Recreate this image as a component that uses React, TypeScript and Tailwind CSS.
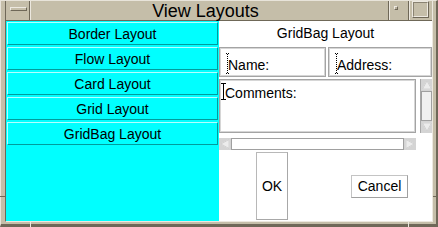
import React from "react";

const font = { fontFamily: '"Liberation Sans", Arial, sans-serif' };

function Arrow({ dir }: { dir: "up" | "down" | "left" | "right" }) {
  const pts: Record<string, string> = {
    up: "6,2 10.5,10 1.5,10",
    down: "6,10 10.5,2 1.5,2",
    left: "2,6 10,1.5 10,10.5",
    right: "10,6 2,1.5 2,10.5",
  };
  return (
    <svg width="12" height="12" viewBox="0 0 12 12" className="block">
      <polygon points={pts[dir]} fill="#ececec" stroke="#ffffff" strokeWidth="1" />
      <polygon points={pts[dir]} fill="none" stroke="#b0b0b0" strokeWidth="0.6" />
    </svg>
  );
}

function DottedCaret() {
  return (
    <svg width="3" height="21" viewBox="0 0 3 21" className="block shrink-0">
      <line x1="0" y1="0.5" x2="3" y2="0.5" stroke="#000" strokeWidth="1" strokeDasharray="1 1" />
      <line x1="1.5" y1="1" x2="1.5" y2="20" stroke="#000" strokeWidth="1" strokeDasharray="1 1" />
      <line x1="0" y1="20.5" x2="3" y2="20.5" stroke="#000" strokeWidth="1" strokeDasharray="1 1" />
    </svg>
  );
}

function Field({ label, width }: { label: string; width: string }) {
  return (
    <div
      className={`${width} h-[30px] flex items-start pl-[6px] border border-[#a4a4a4] shadow-[inset_0_0_0_1px_#d6d6d6] bg-white`}
    >
      <div className="mt-[5px]">
        <DottedCaret />
      </div>
      <span className="-ml-[1px] mt-[9px] leading-[16px] text-[14px] text-black">{label}</span>
    </div>
  );
}

const layouts = ["Border Layout", "Flow Layout", "Card Layout", "Grid Layout", "GridBag Layout"];

export default function App() {
  return (
    <div
      style={font}
      className="relative w-[438px] h-[227px] bg-[#c5bea9] border-t border-l border-t-[#e8e4da] border-l-[#e8e4da] border-r-2 border-r-[#6f6858] border-b-[3px] border-b-[#6f6858] pl-[4px] pr-[3px] pb-[2px]"
    >
      <div className="h-full flex flex-col border-l border-l-[#6f6858] border-r border-r-[#ece8df] border-b border-b-[#ece8df]">
        {/* Title bar */}
        <div className="h-[20px] flex border-b border-b-[#6f6858]">
          <div className="w-[24px] h-full border-r border-r-[#6f6858] pl-[4px] pt-[6px]">
            <div className="w-[17px] h-[4px] border-t border-l border-t-[#ede9e0] border-l-[#ede9e0] border-b border-r border-b-[#6f6858] border-r-[#6f6858]" />
          </div>
          <div className="flex-1 h-full border-l border-l-[#ece8df] border-r border-r-[#6f6858] flex items-center justify-center pr-[8px]">
            <span className="text-[18px] leading-[20px] text-black">View Layouts</span>
          </div>
          <div className="w-[20px] h-full border-l border-l-[#ece8df] border-r border-r-[#6f6858] pl-[4px] pt-[5px]">
            <div className="w-[4px] h-[4px] border-t border-l border-t-[#ede9e0] border-l-[#ede9e0] border-b border-r border-b-[#6f6858] border-r-[#6f6858] bg-[#b8b09c]" />
          </div>
          <div className="w-[23px] h-full border-l border-l-[#ece8df] pl-[2px] pt-0">
            <div className="w-[17px] h-[17px] border border-t-[#ede9e0] border-l-[#ede9e0] border-b-[#6f6858] border-r-[#6f6858]">
              <div className="w-full h-full border border-t-[#8a8372] border-l-[#8a8372] border-b-[#ede9e0] border-r-[#ede9e0]" />
            </div>
          </div>
        </div>

        {/* Content */}
        <div className="h-[200px] flex">
          <div className="w-[213px] h-full bg-[#00ffff] flex flex-col">
            {layouts.map((l) => (
              <div key={l} className="h-[25px] p-[1px]">
                <div className="h-[23px] flex items-center justify-center border border-t-[#b4ffff] border-l-[#b4ffff] border-b-[#009c9c] border-r-[#009c9c] text-[14px] leading-[16px] text-black">
                  {l}
                </div>
              </div>
            ))}
          </div>

          <div className="w-[213px] h-full bg-white flex flex-col">
            <div className="h-[23px] flex items-center justify-center text-[14px] leading-[16px] text-black">
              GridBag Layout
            </div>
            <div className="mt-[3px] flex gap-[2px]">
              <Field label="Name:" width="w-[107px]" />
              <Field label="Address:" width="w-[104px]" />
            </div>
            <div className="mt-[2px] flex h-[54px]">
              <div className="w-[197px] h-full border border-[#a4a4a4] shadow-[inset_0_0_0_1px_#d6d6d6] flex items-start pl-[1px]">
                <svg width="5" height="17" viewBox="0 0 5 17" className="block shrink-0 mt-[3px]">
                  <line x1="0" y1="0.5" x2="5" y2="0.5" stroke="#000" strokeWidth="1" />
                  <line x1="2.5" y1="0" x2="2.5" y2="17" stroke="#000" strokeWidth="1" />
                  <line x1="0" y1="16.5" x2="5" y2="16.5" stroke="#000" strokeWidth="1" />
                </svg>
                <span className="-ml-[1px] mt-[5px] text-[14px] leading-[16px] text-black">Comments:</span>
              </div>
              <div className="ml-[4px] w-[12px] h-full flex flex-col bg-[#c8c8c8] border-l border-l-[#a8a8a8]">
                <div className="h-[12px] bg-[#d4d4d4]">
                  <Arrow dir="up" />
                </div>
                <div className="flex-1 bg-[#f0f0f0] border border-[#a0a0a0]" />
                <div className="h-[12px] bg-[#d4d4d4]">
                  <Arrow dir="down" />
                </div>
              </div>
            </div>
            <div className="mt-[5px] w-[197px] h-[12px] flex bg-[#c8c8c8]">
              <div className="w-[12px] h-full bg-[#d4d4d4]">
                <Arrow dir="left" />
              </div>
              <div className="flex-1 h-full bg-white border border-[#a0a0a0]" />
              <div className="w-[12px] h-full bg-[#d4d4d4]">
                <Arrow dir="right" />
              </div>
            </div>
            <div className="mt-[2px] flex items-center">
              <div className="ml-[37px] w-[32px] h-[68px] flex items-center justify-center bg-white border border-[#b8b8b8] border-b-[#a8a8a8] border-r-[#a8a8a8] text-[14px] leading-[16px] text-black">
                OK
              </div>
              <div className="ml-[63px] w-[57px] h-[23px] flex items-center justify-center bg-white border border-[#c4c4c4] border-b-[#a0a0a0] border-r-[#a0a0a0] text-[14px] leading-[16px] text-black">
                Cancel
              </div>
            </div>
          </div>
        </div>
      </div>

      {/* resize handle ticks on the frame */}
      <span className="absolute left-[-1px] top-[195px] w-[5px] h-[1px] bg-[#6f6858]" />
      <span className="absolute right-[-2px] top-[195px] w-[5px] h-[1px] bg-[#6f6858]" />
      <span className="absolute left-[29px] bottom-[-3px] w-[1px] h-[5px] bg-[#ece8df]" />
      <span className="absolute left-[407px] bottom-[-3px] w-[1px] h-[5px] bg-[#ece8df]" />
    </div>
  );
}
